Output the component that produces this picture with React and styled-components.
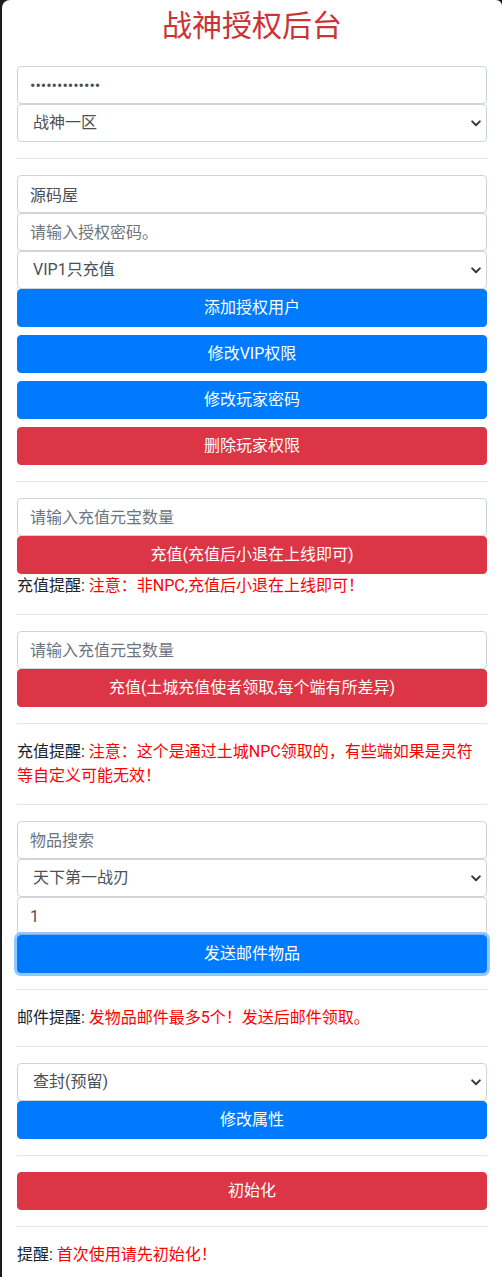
import React from "react";
import styled, { createGlobalStyle } from "styled-components";

const Global = createGlobalStyle`
  html, body { margin: 0; padding: 0; }
  body {
    background: #1c1c1c;
    font-family: Roboto, "Noto Sans CJK SC", "Noto Sans", sans-serif;
    font-size: 16px;
    line-height: 1.5;
    color: #212529;
  }
  * { box-sizing: border-box; }
`;

const Page = styled.div`
  margin-left: 2px;
  background: #fff;
  border-radius: 8px 6px 0 0;
  padding: 8px 15px 16px 15px;
  min-height: 1277px;
`;

const Title = styled.h2`
  margin: 0 0 22px 0;
  text-align: center;
  font-size: 30px;
  font-weight: 400;
  line-height: 36px;
  color: #cc3333;
`;

const Stack = styled.div`
  display: flex;
  flex-direction: column;
  gap: ${(p) => p.$gap || 0}px;
`;

const Input = styled.input`
  display: block;
  width: 100%;
  height: 38px;
  padding: 6px 12px;
  font: inherit;
  font-size: 16px;
  line-height: 1.5;
  color: #495057;
  background: #fff;
  border: 1px solid #ced4da;
  border-radius: 4px;
  outline: none;
  &::placeholder { color: #6c757d; opacity: 1; }
`;

const SelectWrap = styled.div`
  position: relative;
  width: 100%;
`;

const Select = styled.select`
  display: block;
  width: 100%;
  height: 38px;
  padding: 6px 28px 6px 15px;
  font: inherit;
  font-size: 16px;
  line-height: 1.5;
  color: #495057;
  background: #fff;
  border: 1px solid #ced4da;
  border-radius: 4px;
  appearance: none;
  -webkit-appearance: none;
  outline: none;
`;

const Chevron = styled.svg`
  position: absolute;
  right: 6px;
  top: 50%;
  width: 10px;
  height: 7px;
  margin-top: -3px;
  pointer-events: none;
`;

const Button = styled.button`
  display: block;
  width: 100%;
  height: 38px;
  padding: 6px 12px;
  font: inherit;
  font-size: 16px;
  line-height: 1.5;
  color: #fff;
  text-align: center;
  background: ${(p) => (p.$variant === "danger" ? "#dc3545" : "#007bff")};
  border: 1px solid ${(p) => (p.$variant === "danger" ? "#dc3545" : "#007bff")};
  border-radius: 4px;
  cursor: pointer;
  box-shadow: ${(p) => (p.$focused ? "0 0 0 3px rgba(38,143,255,0.5)" : "none")};
  position: ${(p) => (p.$focused ? "relative" : "static")};
`;

const Rule = styled.hr`
  margin: 16px 0;
  border: 0;
  border-top: 1px solid rgba(0, 0, 0, 0.1);
  height: 0;
`;

const Note = styled.p`
  margin: ${(p) => (p.$top ? "0" : "0")} 0 0 0;
  line-height: 24px;
  color: #212529;
`;

const Warn = styled.span`
  color: #ff0000;
`;

function Dropdown({ value, options }) {
  return (
    <SelectWrap>
      <Select defaultValue={value}>
        {options.map((o) => (
          <option key={o}>{o}</option>
        ))}
      </Select>
      <Chevron viewBox="0 0 10 7">
        <path d="M1.2 1.4 L5 5.2 L8.8 1.4" fill="none" stroke="#3a3a3a" strokeWidth="2" strokeLinecap="round" strokeLinejoin="round" />
      </Chevron>
    </SelectWrap>
  );
}

export default function App() {
  return (
    <>
      <Global />
      <Page>
        <Title>战神授权后台</Title>

        <Stack>
          <Input type="password" defaultValue="1234567890123" />
          <Dropdown value="战神一区" options={["战神一区", "战神二区"]} />
        </Stack>

        <Rule />

        <Stack $gap={8}>
          <Stack>
            <Input defaultValue="源码屋" />
            <Input placeholder="请输入授权密码。" />
            <Dropdown value="VIP1只充值" options={["VIP1只充值", "VIP2", "VIP3"]} />
            <Button>添加授权用户</Button>
          </Stack>
          <Button>修改VIP权限</Button>
          <Button>修改玩家密码</Button>
          <Button $variant="danger">删除玩家权限</Button>
        </Stack>

        <Rule />

        <Stack>
          <Input placeholder="请输入充值元宝数量" />
          <Button $variant="danger">充值(充值后小退在上线即可)</Button>
          <Note>
            充值提醒: <Warn>注意：非NPC,充值后小退在上线即可！</Warn>
          </Note>
        </Stack>

        <Rule />

        <Stack>
          <Input placeholder="请输入充值元宝数量" />
          <Button $variant="danger">充值(土城充值使者领取,每个端有所差异)</Button>
        </Stack>

        <Rule />

        <Note>
          充值提醒: <Warn>注意：这个是通过土城NPC领取的，有些端如果是灵符等自定义可能无效！</Warn>
        </Note>

        <Rule />

        <Stack>
          <Input placeholder="物品搜索" />
          <Dropdown value="天下第一战刃" options={["天下第一战刃"]} />
          <Input defaultValue="1" />
          <Button $focused>发送邮件物品</Button>
        </Stack>

        <Rule />

        <Note>
          邮件提醒: <Warn>发物品邮件最多5个！发送后邮件领取。</Warn>
        </Note>

        <Rule />

        <Stack>
          <Dropdown value="查封(预留)" options={["查封(预留)"]} />
          <Button>修改属性</Button>
        </Stack>

        <Rule />

        <Button $variant="danger">初始化</Button>

        <Rule />

        <Note>
          提醒: <Warn>首次使用请先初始化！</Warn>
        </Note>
      </Page>
    </>
  );
}
